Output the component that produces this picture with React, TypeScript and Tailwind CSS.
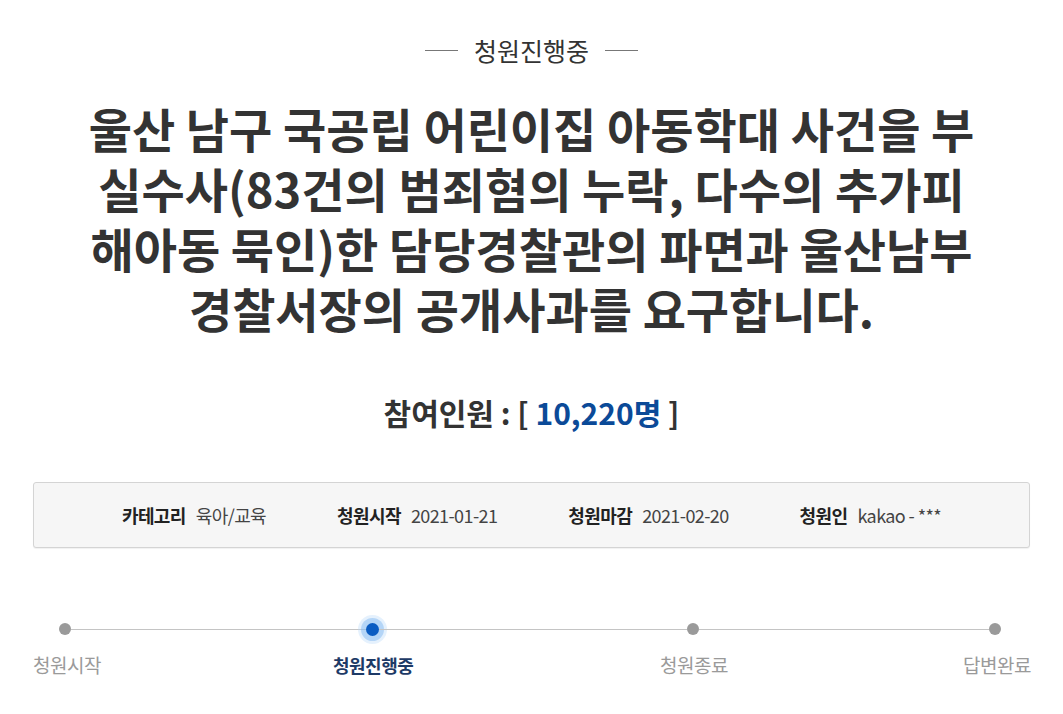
import React from 'react';

const font = { fontFamily: '"Noto Sans CJK KR", "Noto Sans", sans-serif' };

function InfoItem({ label, value }: { label: string; value: string }) {
  return (
    <div className="flex items-center gap-[10px] text-[18px] tracking-[-0.6px]">
      <span className="font-bold text-[#222]">{label}</span>
      <span className="text-[#444]">{value}</span>
    </div>
  );
}

export default function App() {
  return (
    <div className="min-h-screen bg-white px-[33px] text-[#333]" style={font}>
      {/* status heading */}
      <div className="flex items-center justify-center gap-[16px] pt-[34px]">
        <span className="h-px w-[33px] bg-[#777]" />
        <span className="text-[25px] leading-[32px] text-[#333]">청원진행중</span>
        <span className="h-px w-[33px] bg-[#777]" />
      </div>

      <h1 className="mx-auto mt-[32px] w-[900px] text-center text-[47px] font-bold leading-[60px] text-[#333]">
        울산 남구 국공립 어린이집 아동학대 사건을 부실수사(83건의 범죄혐의 누락, 다수의 추가피해아동 묵인)한 담당경찰관의 파면과 울산남부경찰서장의 공개사과를 요구합니다.
      </h1>

      <div className="mt-[54px] text-center text-[30px] font-bold leading-[40px] text-[#333]">
        참여인원 : [ <span className="text-[#0b4a98]">10,220명</span> ]
      </div>

      <div className="mt-[50px] flex h-[66px] items-center justify-center gap-[71px] rounded-[3px] border border-[#d4d4d4] bg-[#f6f6f6] shadow-[0_1px_1px_rgba(0,0,0,0.06)]">
        <InfoItem label="카테고리" value="육아/교육" />
        <InfoItem label="청원시작" value="2021-01-21" />
        <InfoItem label="청원마감" value="2021-02-20" />
        <InfoItem label="청원인" value="kakao - ***" />
      </div>

      {/* progress */}
      <div className="mt-[67px] flex h-[28px] items-center pl-[26px]">
        <span className="h-[12px] w-[12px] rounded-full bg-[#9a9a9a]" />
        <span className="h-px w-[295px] bg-[#c4c4c4]" />
        <span className="h-[13px] w-[13px] rounded-full bg-[#0a5cc2] shadow-[0_0_0_5px_rgba(120,180,240,0.45),0_0_0_8px_rgba(180,215,250,0.35)]" />
        <span className="h-px w-[308px] bg-[#c4c4c4]" />
        <span className="h-[12px] w-[12px] rounded-full bg-[#9a9a9a]" />
        <span className="h-px w-[290px] bg-[#c4c4c4]" />
        <span className="h-[12px] w-[12px] rounded-full bg-[#9a9a9a]" />
      </div>

      <div className="mt-[9px] flex items-center text-[19px] leading-[26px] tracking-[-0.5px]">
        <span className="w-[67px] whitespace-nowrap text-[#9a9a9a]">청원시작</span>
        <span className="ml-[233px] w-[80px] whitespace-nowrap text-[18px] font-bold text-[#1d3a66]">청원진행중</span>
        <span className="ml-[247px] w-[67px] whitespace-nowrap text-[#9a9a9a]">청원종료</span>
        <span className="ml-auto w-[67px] whitespace-nowrap text-right text-[#9a9a9a]">답변완료</span>
      </div>
    </div>
  );
}
